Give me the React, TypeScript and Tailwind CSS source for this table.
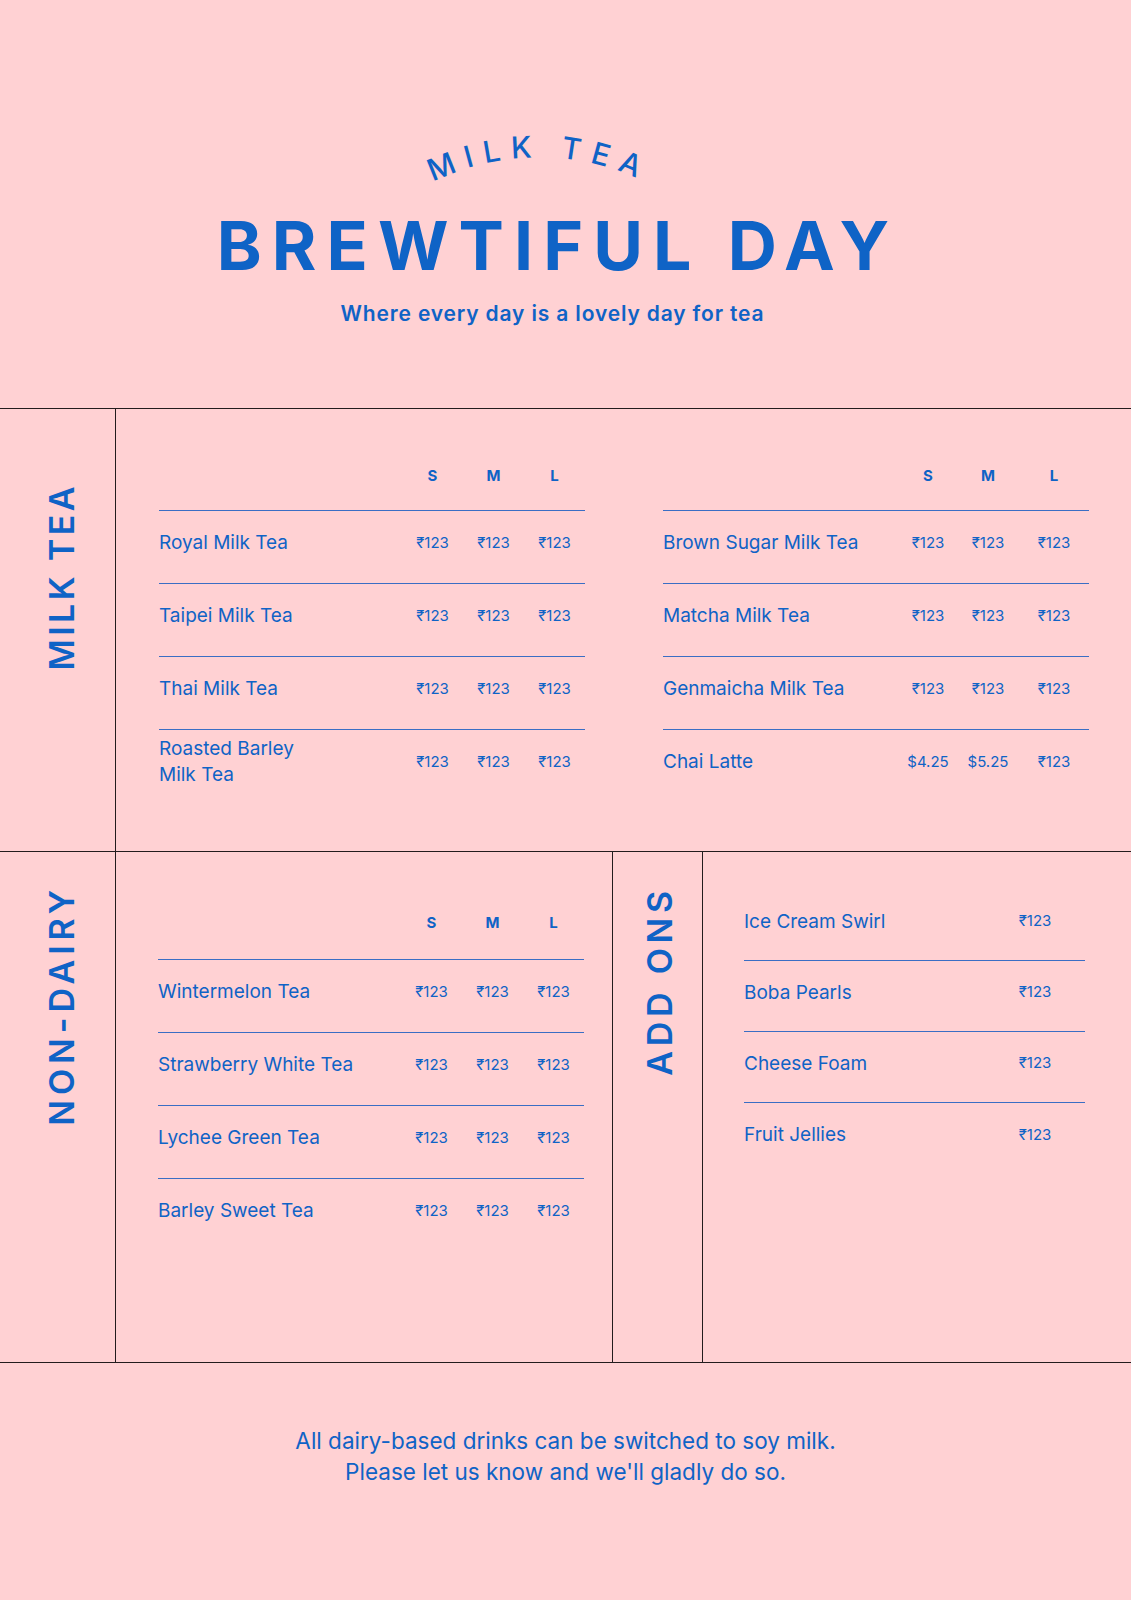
const BLUE = 'text-[#0f63c6]'

type Item = { name: React.ReactNode; prices: string[] }

const MILK_LEFT: Item[] = [
  { name: 'Royal Milk Tea', prices: ['₹123', '₹123', '₹123'] },
  { name: 'Taipei Milk Tea', prices: ['₹123', '₹123', '₹123'] },
  { name: 'Thai Milk Tea', prices: ['₹123', '₹123', '₹123'] },
  { name: <>Roasted Barley<br />Milk Tea</>, prices: ['₹123', '₹123', '₹123'] },
]

const MILK_RIGHT: Item[] = [
  { name: 'Brown Sugar Milk Tea', prices: ['₹123', '₹123', '₹123'] },
  { name: 'Matcha Milk Tea', prices: ['₹123', '₹123', '₹123'] },
  { name: 'Genmaicha Milk Tea', prices: ['₹123', '₹123', '₹123'] },
  { name: 'Chai Latte', prices: ['$4.25', '$5.25', '₹123'] },
]

const NON_DAIRY: Item[] = [
  { name: 'Wintermelon Tea', prices: ['₹123', '₹123', '₹123'] },
  { name: 'Strawberry White Tea', prices: ['₹123', '₹123', '₹123'] },
  { name: 'Lychee Green Tea', prices: ['₹123', '₹123', '₹123'] },
  { name: 'Barley Sweet Tea', prices: ['₹123', '₹123', '₹123'] },
]

const ADD_ONS = ['Ice Cream Swirl', 'Boba Pearls', 'Cheese Foam', 'Fruit Jellies']

function SideLabel({ text, pad, track }: { text: string; pad: string; track: string }) {
  return (
    <div className={`flex justify-center ${pad}`}>
      <div className={`rotate-180 text-[34px] font-semibold leading-none [writing-mode:vertical-rl] ${track}`}>
        {text}
      </div>
    </div>
  )
}

function PriceTable({ items, cols, headMb }: { items: Item[]; cols: string; headMb: string }) {
  return (
    <div className="flex-1">
      <div className={`grid h-[30px] items-center text-[15px] font-bold ${cols} ${headMb}`}>
        <span />
        <span className="text-center">S</span>
        <span className="text-center">M</span>
        <span className="text-center">L</span>
      </div>
      {items.map((it, i) => (
        <div key={i} className={`grid h-[73px] items-center border-t-[1.5px] border-[#3a6ec4] pb-2 ${cols}`}>
          <div className="text-[19px] leading-[26px]">{it.name}</div>
          {it.prices.map((p, j) => (
            <div key={j} className="text-center text-[15px]">{p}</div>
          ))}
        </div>
      ))}
    </div>
  )
}

export default function App() {
  return (
    <div
      className={`flex min-h-[1600px] w-full flex-col bg-[#ffd1d3] ${BLUE}`}
      style={{ fontFamily: 'Inter, "Noto Sans", "DejaVu Sans", sans-serif' }}
    >
      <header className="flex h-[408px] flex-col items-center pt-[110px]">
        <svg width="300" height="75" viewBox="0 0 300 75" className="mr-[54px] overflow-visible">
          <defs>
            <path id="arc" d="M 0 100 A 240 240 0 0 1 300 100" />
          </defs>
          <text fill="#0f63c6" fontSize="30" fontWeight="500" letterSpacing="10" fontFamily="Inter, sans-serif">
            <textPath href="#arc" startOffset="50%" textAnchor="middle">
              MILK TEA
            </textPath>
          </text>
        </svg>
        <h1 className="mt-[26px] pr-[15px] text-[68px] font-bold leading-none tracking-[0.148em]">BREWTIFUL DAY</h1>
        <p className="mt-[21px] pr-[26px] text-[21px] font-semibold leading-[28px] tracking-[0.04em]">
          Where every day is a lovely day for tea
        </p>
      </header>

      <section className="grid h-[443px] grid-cols-[116px_1fr] border-t-[1.5px] border-[#231c1d]">
        <div className="border-r-[1.5px] border-[#231c1d]">
          <SideLabel text="MILK TEA" pad="pl-[8px] pt-[74px]" track="tracking-[0.1em]" />
        </div>
        <div className="flex gap-[78px] pl-[43px] pr-[42px] pt-[52px]">
          <PriceTable items={MILK_LEFT} cols="grid-cols-[1fr_61px_61px_61px]" headMb="mb-[19px]" />
          <PriceTable items={MILK_RIGHT} cols="grid-cols-[1fr_58px_62px_70px]" headMb="mb-[19px]" />
        </div>
      </section>

      <section className="grid h-[512px] grid-cols-[116px_497px_90px_1fr] border-y-[1.5px] border-[#231c1d]">
        <div className="border-r-[1.5px] border-[#231c1d]">
          <SideLabel text="NON-DAIRY" pad="pl-[8px] pt-[33px]" track="tracking-[0.145em]" />
        </div>
        <div className="flex border-r-[1.5px] border-[#231c1d] pl-[42px] pr-[28px] pt-[56px]">
          <PriceTable items={NON_DAIRY} cols="grid-cols-[1fr_61px_61px_61px]" headMb="mb-[21px]" />
        </div>
        <div className="border-r-[1.5px] border-[#231c1d]">
          <SideLabel text="ADD ONS" pad="pl-[4px] pt-[34px]" track="tracking-[0.14em]" />
        </div>
        <div className="pl-[41px] pr-[46px] pt-[38px]">
          {ADD_ONS.map((name, i) => (
            <div
              key={name}
              className={`grid h-[71px] grid-cols-[1fr_100px] items-center pb-[7px] ${i < ADD_ONS.length - 1 ? 'border-b-[1.5px] border-[#3a6ec4]' : ''}`}
            >
              <div className="text-[19px] leading-[26px]">{name}</div>
              <div className="text-center text-[15px]">₹123</div>
            </div>
          ))}
        </div>
      </section>

      <footer className="flex flex-1 flex-col items-center pt-[62px] text-[22.5px] leading-[31px]">
        <p>All dairy-based drinks can be switched to soy milk.</p>
        <p>Please let us know and we&apos;ll gladly do so.</p>
      </footer>
    </div>
  )
}
